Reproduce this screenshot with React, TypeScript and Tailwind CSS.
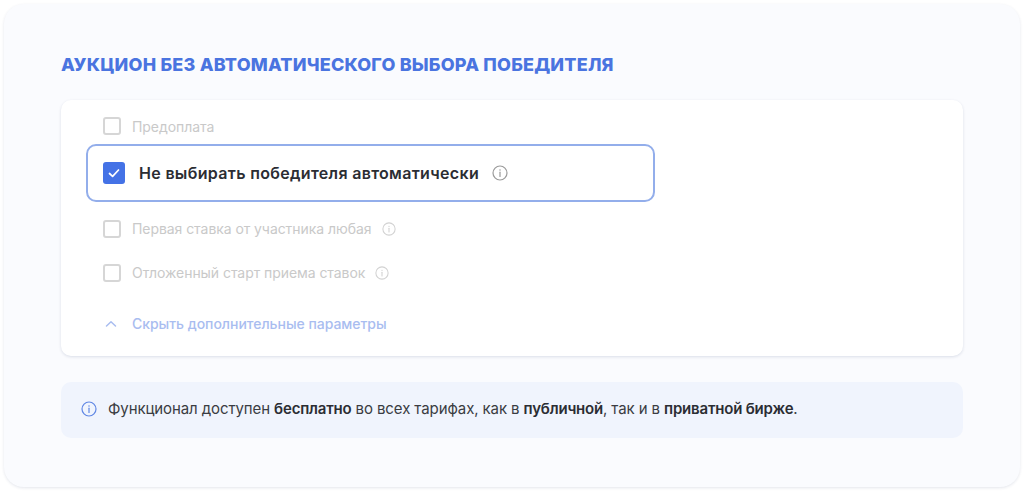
import React from "react";

const Info = ({ size, color, sw = 1.2 }: { size: number; color: string; sw?: number }) => (
  <svg width={size} height={size} viewBox="0 0 16 16" fill="none" className="shrink-0">
    <circle cx="8" cy="8" r="7" stroke={color} strokeWidth={sw} />
    <path d="M8 7.2V11.4" stroke={color} strokeWidth={sw} strokeLinecap="round" />
    <circle cx="8" cy="4.9" r="0.75" fill={color} />
  </svg>
);

const Box = () => <span className="w-[18px] h-[18px] rounded-[3px] border-2 border-[#d6d6d6] bg-white shrink-0" />;

export default function App() {
  return (
    <div className="w-[1024px] h-[491px] bg-white p-1 overflow-hidden font-['Inter',sans-serif]">
      <div className="w-[1016px] h-[483px] rounded-[20px] bg-[#fafbfe] shadow-[0_1px_3px_rgba(30,50,100,0.12)] pt-[50px] px-[57px]">
        <h1 className="text-[18px] leading-[22px] font-extrabold text-[#4a74e0] tracking-[0.2px] m-0">
          АУКЦИОН БЕЗ АВТОМАТИЧЕСКОГО ВЫБОРА ПОБЕДИТЕЛЯ
        </h1>
        <div className="mt-[24px] h-[256px] w-[902px] rounded-[10px] bg-white shadow-[0_1px_3px_rgba(30,50,100,0.14)] px-[25px] pt-[17px]">
          <div className="flex items-center h-[18px] pl-[17px] gap-[11px] text-[14px] tracking-[-0.06px] text-[#c9c9c9]">
            <Box />
            <span>Предоплата</span>
          </div>
          <div className="mt-[9px] flex items-center h-[58px] w-[569px] rounded-[10px] border-2 border-[#93aeeb] pl-[15px]">
            <span className="w-[22px] h-[22px] rounded-[3px] bg-[#4472e6] flex items-center justify-center shrink-0">
              <svg width="14" height="14" viewBox="0 0 14 14" fill="none">
                <path d="M2.5 7.5L5.6 10.3L11.5 4" stroke="#fff" strokeWidth="1.7" strokeLinecap="round" strokeLinejoin="round" />
              </svg>
            </span>
            <span className="ml-[14px] text-[16px] tracking-[0.32px] font-semibold text-[#2b2d33]">Не выбирать победителя автоматически</span>
            <span className="ml-[13px] flex"><Info size={16} color="#9a9a9a" /></span>
          </div>
          <div className="mt-[18px] flex items-center h-[18px] pl-[17px] text-[14px] tracking-[-0.06px] text-[#c9c9c9]">
            <Box />
            <span className="ml-[11px] -translate-y-px">Первая ставка от участника любая</span>
            <span className="ml-[11px] flex"><Info size={14} color="#d2d2d2" /></span>
          </div>
          <div className="mt-[26px] flex items-center h-[18px] pl-[17px] text-[14px] tracking-[-0.06px] text-[#c9c9c9]">
            <Box />
            <span className="ml-[11px] -translate-y-px">Отложенный старт приема ставок</span>
            <span className="ml-[10px] flex"><Info size={14} color="#d2d2d2" /></span>
          </div>
          <div className="mt-[33px] flex items-center h-[18px] pl-[18px] text-[14px] tracking-[-0.03px] font-medium text-[#a9bdf0]">
            <svg width="14" height="14" viewBox="0 0 14 14" fill="none">
              <path d="M2.5 9L7 4.8L11.5 9" stroke="#a9bdf0" strokeWidth="1.5" strokeLinecap="round" strokeLinejoin="round" />
            </svg>
            <span className="ml-[14px] -translate-y-px">Скрыть дополнительные параметры</span>
          </div>
        </div>
        <div className="mt-[26px] h-[56px] w-[902px] rounded-[10px] bg-[#f0f4fd] flex items-center pl-[20px] text-[15px] tracking-[-0.1px] text-[#3a3c42]">
          <span className="flex -translate-y-px"><Info size={16} color="#5f86e4" /></span>
          <span className="ml-[11px] -translate-y-px">
            Функционал доступен <b className="font-semibold tracking-[-0.2px] text-[#2b2d33]">бесплатно</b> во всех тарифах, как в <b className="font-semibold tracking-[-0.2px] text-[#2b2d33]">публичной</b>, так и в <b className="font-semibold tracking-[-0.2px] text-[#2b2d33]">приватной бирже</b>.
          </span>
        </div>
      </div>
    </div>
  );
}
